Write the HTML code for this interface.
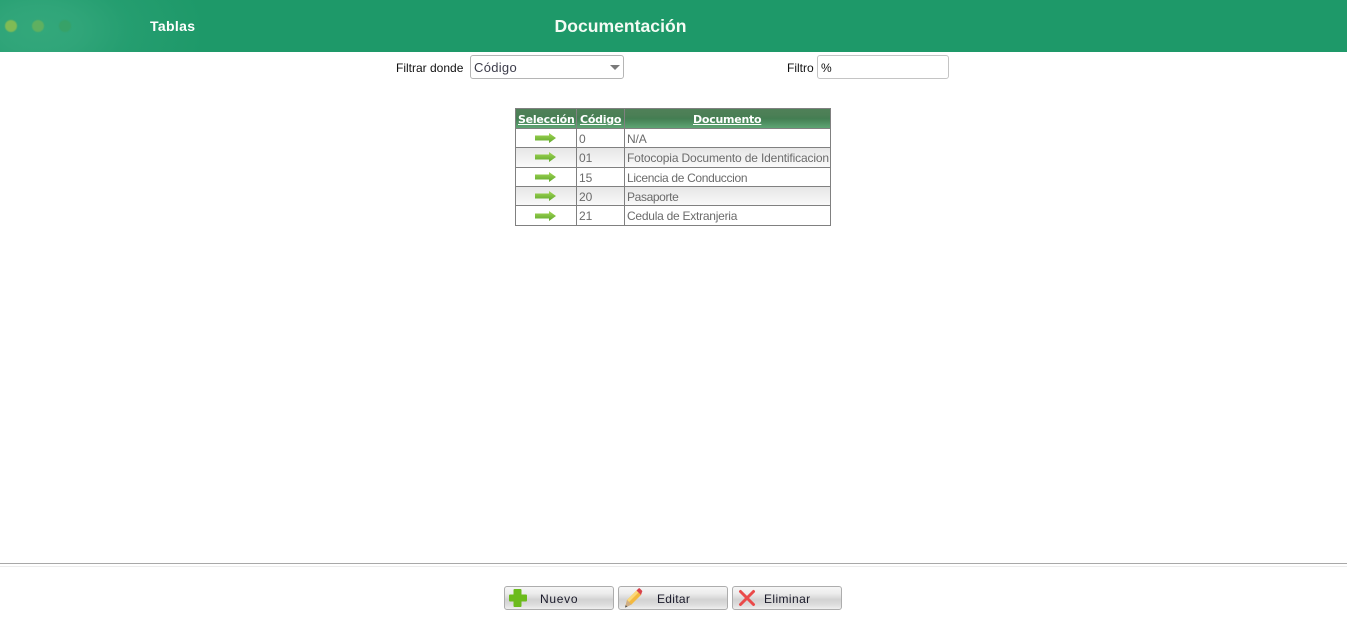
<!DOCTYPE html>
<html lang="es">
<head>
<meta charset="utf-8">
<title>Documentación</title>
<style>
html,body{margin:0;padding:0;background:#fff;width:1347px;height:643px;overflow:hidden;font-family:"Liberation Sans",sans-serif}
.a{position:absolute;white-space:nowrap}
#bar{left:0;top:0;width:1347px;height:52px;background:#1e9969}
#glow{left:0;top:0;width:200px;height:52px;background:radial-gradient(ellipse 165px 95px at 40px 30px,#33a87b 0%,#30a579 25%,rgba(40,160,115,.65) 55%,rgba(30,153,105,0) 100%)}
.dot{border-radius:50%;width:12px;height:12px;top:20px;filter:blur(.4px)}
.lbl{font-size:12px;color:#111;line-height:14px}
.box{box-sizing:border-box;background:#fff;border:1px solid #c4c4c4;border-radius:3px}
.c{position:absolute;box-sizing:border-box;font-size:12px;color:#6b6b6b;line-height:14px;white-space:nowrap}
.t{letter-spacing:-.15px}
.h{font-family:"DejaVu Sans",sans-serif;font-weight:bold;font-size:11px;color:#fff;text-decoration:underline;letter-spacing:-.25px}
.btn{position:absolute;top:586px;width:110px;height:24px;box-sizing:border-box;border:1px solid #adadad;border-radius:3px;background:linear-gradient(#f6f6f6 0%,#ececec 30%,#d2d2d2 58%,#dedede 82%,#efefef 100%);font-size:12px;letter-spacing:.3px;color:#1a1a2a}
.btn span{position:absolute;top:5px;line-height:14px}
.btn svg{position:absolute}
</style>
</head>
<body>
<div class="a" id="bar"></div>
<div class="a" id="glow"></div>
<div class="a dot" style="left:5px;background:#7fbb55"></div>
<div class="a dot" style="left:32px;background:#5fb060"></div>
<div class="a dot" style="left:59px;background:#37a268"></div>
<div class="a" style="left:150px;top:18px;font-size:14px;font-weight:bold;color:#fff;line-height:16px;letter-spacing:.35px">Tablas</div>
<div class="a" style="left:554.5px;top:16px;font-size:17.6px;font-weight:bold;color:#f4fbf4;line-height:20px">Documentación</div>

<div class="a lbl" style="left:396px;top:61px">Filtrar donde</div>
<div class="a box" style="left:470px;top:55px;width:154px;height:24px;border-color:#b5b5b5"></div>
<div class="a" style="left:474px;top:60px;font-size:13px;line-height:15px;color:#3c3c4a;letter-spacing:.3px">Código</div>
<div class="a" style="left:610px;top:65px;width:0;height:0;border-left:5px solid transparent;border-right:5px solid transparent;border-top:5px solid #7a7a7a"></div>

<div class="a lbl" style="left:787px;top:61px">Filtro</div>
<div class="a box" style="left:817px;top:55px;width:132px;height:24px"></div>
<div class="a lbl" style="left:821px;top:61px">%</div>

<!-- table -->
<div class="a" style="left:515px;top:108px;width:316px;height:118px;box-sizing:border-box;border:1px solid #808080;background:#fff"></div>
<div class="a" style="left:516px;top:109px;width:314px;height:19px;background:linear-gradient(#4f8058 0%,#4c7f56 30%,#437e52 50%,#5ea574 100%)"></div>
<div class="a" style="left:516px;top:148px;width:314px;height:19px;background:linear-gradient(#e6e6e6,#fafafa)"></div>
<div class="a" style="left:516px;top:187px;width:314px;height:19px;background:linear-gradient(#e6e6e6,#fafafa)"></div>
<div class="a" style="left:516px;top:128px;width:314px;height:1px;background:#808080"></div>
<div class="a" style="left:516px;top:147px;width:314px;height:1px;background:#808080"></div>
<div class="a" style="left:516px;top:167px;width:314px;height:1px;background:#808080"></div>
<div class="a" style="left:516px;top:186px;width:314px;height:1px;background:#808080"></div>
<div class="a" style="left:516px;top:205px;width:314px;height:1px;background:#808080"></div>
<div class="a" style="left:576px;top:109px;width:1px;height:116px;background:#808080"></div>
<div class="a" style="left:624px;top:109px;width:1px;height:116px;background:#808080"></div>

<div class="c h" style="left:518px;top:113px">Selección</div>
<div class="c h" style="left:580px;top:113px">Código</div>
<div class="c h" style="left:693px;top:113px">Documento</div>

<svg class="a" style="left:534px;top:133px" width="23" height="90" viewBox="0 0 23 90">
<defs><linearGradient id="g" x1="0" y1="0" x2="0" y2="1"><stop offset="0" stop-color="#a2d654"/><stop offset="1" stop-color="#5fa82c"/></linearGradient></defs>
<path d="M1 2.500h14V0l7 5-7 5V7.500H1z" fill="url(#g)"/>
<path d="M1 21.500h14V19l7 5-7 5v-2.500H1z" fill="url(#g)"/>
<path d="M1 41.500h14V39l7 5-7 5v-2.500H1z" fill="url(#g)"/>
<path d="M1 60.500h14V58l7 5-7 5v-2.500H1z" fill="url(#g)"/>
<path d="M1 80.500h14V78l7 5-7 5v-2.500H1z" fill="url(#g)"/>
</svg>

<div class="c" style="left:579px;top:132px">0</div>
<div class="c t" style="left:627px;top:132px">N/A</div>
<div class="c" style="left:579px;top:151px">01</div>
<div class="c t" style="left:627px;top:151px">Fotocopia Documento de Identificacion</div>
<div class="c" style="left:579px;top:171px">15</div>
<div class="c t" style="left:627px;top:171px;letter-spacing:-.33px">Licencia de Conduccion</div>
<div class="c" style="left:579px;top:190px">20</div>
<div class="c t" style="left:627px;top:190px;letter-spacing:-.37px">Pasaporte</div>
<div class="c" style="left:579px;top:209px">21</div>
<div class="c t" style="left:627px;top:209px;letter-spacing:-.25px">Cedula de Extranjeria</div>

<!-- footer -->
<div class="a" style="left:0;top:563px;width:1347px;height:1px;background:#a8a8a8"></div>
<div class="a" style="left:0;top:566px;width:1347px;height:1px;background:#ececec"></div>

<div class="btn" style="left:504px">
<svg style="left:4px;top:2px" width="18" height="18" viewBox="0 0 18 18"><path d="M5.500 0h6a1 1 0 0 1 1 1v4.500H17a1 1 0 0 1 1 1v5a1 1 0 0 1-1 1h-4.500V17a1 1 0 0 1-1 1h-6a1 1 0 0 1-1-1v-4.500H1a1 1 0 0 1-1-1v-5a1 1 0 0 1 1-1h3.500V1a1 1 0 0 1 1-1z" fill="#6cbb1c"/></svg>
<span style="left:35px;letter-spacing:.7px">Nuevo</span>
</div>
<div class="btn" style="left:618px">
<svg style="left:5px;top:1px" width="19" height="20" viewBox="0 0 19 20"><path d="M1 19.500L3 12 12.500 2.500 17 7 7.500 16.500z" fill="#f3b93f"/><path d="M3 12L12.500 2.500 14.500 4.500 5 14z" fill="#fbd878"/><path d="M1 19.500L3 12 7.500 16.500z" fill="#cfae85"/><path d="M1 19.500L1.700 17 3.500 18.800z" fill="#555"/><path d="M12.500 2.500L14.500.500a1 1 0 0 1 1.400 0L18 2.600a1 1 0 0 1 0 1.400L17 7z" fill="#d8424a"/></svg>
<span style="left:38px">Editar</span>
</div>
<div class="btn" style="left:732px">
<svg style="left:5px;top:2px" width="18" height="18" viewBox="0 0 18 18"><path d="M2.500 2.500L15.500 15.500M15.500 2.500L2.500 15.500" stroke="#ea4a4a" stroke-width="3" stroke-linecap="round" fill="none"/></svg>
<span style="left:31px;letter-spacing:.4px">Eliminar</span>
</div>
</body>
</html>
